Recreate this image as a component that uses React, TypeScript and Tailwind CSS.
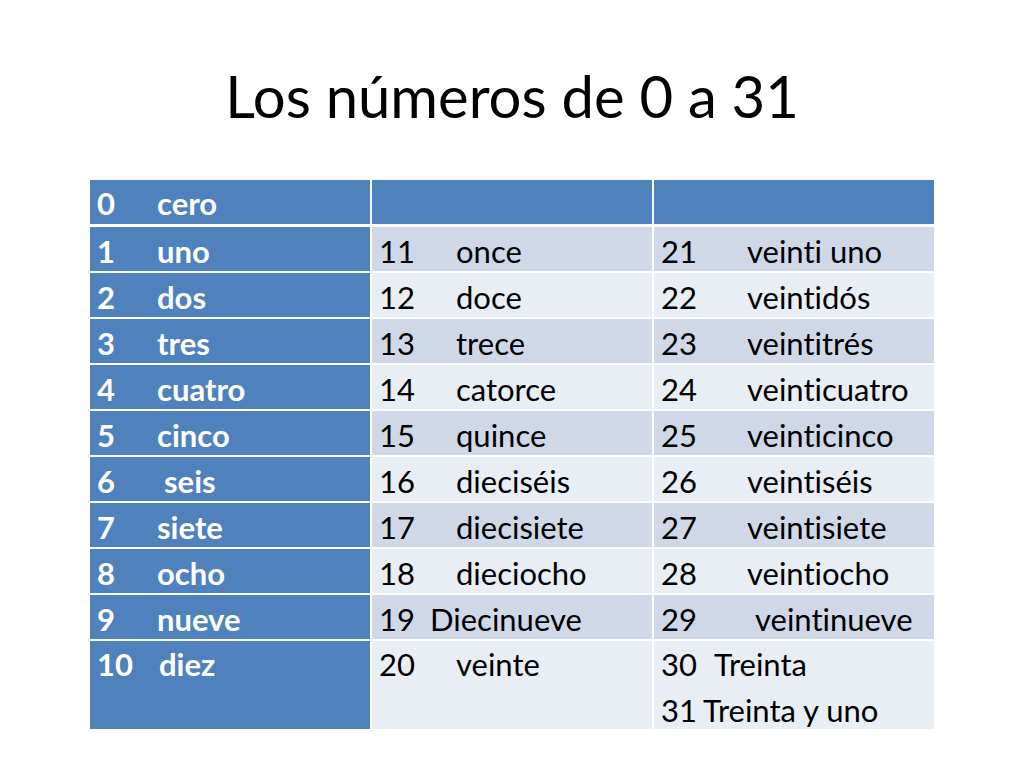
import React from "react";

type Cell = { n: string; w: string; c: string };
type Row = { a: Cell; b: Cell; c: Cell; bg: string };

const rows: Row[] = [
  { a: { n: "1", w: "uno", c: "w-[60px]" }, b: { n: "11", w: "once", c: "w-[77px]" }, c: { n: "21", w: "veinti uno", c: "w-[86px]" }, bg: "bg-[#d0d8e8]" },
  { a: { n: "2", w: "dos", c: "w-[60px]" }, b: { n: "12", w: "doce", c: "w-[77px]" }, c: { n: "22", w: "veintidós", c: "w-[86px]" }, bg: "bg-[#e9edf4]" },
  { a: { n: "3", w: "tres", c: "w-[60px]" }, b: { n: "13", w: "trece", c: "w-[77px]" }, c: { n: "23", w: "veintitrés", c: "w-[86px]" }, bg: "bg-[#d0d8e8]" },
  { a: { n: "4", w: "cuatro", c: "w-[60px]" }, b: { n: "14", w: "catorce", c: "w-[77px]" }, c: { n: "24", w: "veinticuatro", c: "w-[86px]" }, bg: "bg-[#e9edf4]" },
  { a: { n: "5", w: "cinco", c: "w-[60px]" }, b: { n: "15", w: "quince", c: "w-[77px]" }, c: { n: "25", w: "veinticinco", c: "w-[86px]" }, bg: "bg-[#d0d8e8]" },
  { a: { n: "6", w: "seis", c: "w-[67px]" }, b: { n: "16", w: "dieciséis", c: "w-[77px]" }, c: { n: "26", w: "veintiséis", c: "w-[86px]" }, bg: "bg-[#e9edf4]" },
  { a: { n: "7", w: "siete", c: "w-[60px]" }, b: { n: "17", w: "diecisiete", c: "w-[77px]" }, c: { n: "27", w: "veintisiete", c: "w-[86px]" }, bg: "bg-[#d0d8e8]" },
  { a: { n: "8", w: "ocho", c: "w-[60px]" }, b: { n: "18", w: "dieciocho", c: "w-[77px]" }, c: { n: "28", w: "veintiocho", c: "w-[86px]" }, bg: "bg-[#e9edf4]" },
  { a: { n: "9", w: "nueve", c: "w-[60px]" }, b: { n: "19", w: "Diecinueve", c: "w-[51px]" }, c: { n: "29", w: "veintinueve", c: "w-[94px]" }, bg: "bg-[#d0d8e8]" },
];

function Line({ cell, extra }: { cell: Cell; extra?: string }) {
  return (
    <div className={"flex whitespace-nowrap pl-[7px] " + (extra ?? "")}>
      <span className={"shrink-0 " + cell.c}>{cell.n}</span>
      <span>{cell.w}</span>
    </div>
  );
}

export default function App() {
  return (
    <div
      className="w-[1024px] h-[768px] bg-white overflow-hidden [font-variant-ligatures:none]"
      style={{ fontFamily: "Lato, 'Liberation Sans', sans-serif" }}
    >
      <h1 className="pt-[61px] text-center text-[58px] leading-[70px] font-normal text-black">
        Los números de 0 a 31
      </h1>
      <div className="ml-[90px] mt-[49px] w-[844px] flex flex-col text-[31px]">
        <div className="flex gap-x-[2px] h-[44px] mb-[3px] leading-[42px]">
          <div className="w-[280px] bg-[#4f81bd] text-white font-bold pt-[2px]">
            <Line cell={{ n: "0", w: "cero", c: "w-[60px]" }} />
          </div>
          <div className="w-[280px] bg-[#4f81bd]" />
          <div className="w-[280px] bg-[#4f81bd]" />
        </div>
        {rows.map((r, i) => (
          <div key={i} className="flex gap-x-[2px] h-[44px] mb-[2px] leading-[40px]">
            <div className="w-[280px] bg-[#4f81bd] text-white font-bold pt-[4px]">
              <Line cell={r.a} />
            </div>
            <div className={"w-[280px] " + r.bg + " text-black pt-[4px]"}>
              <Line cell={r.b} />
            </div>
            <div className={"w-[280px] " + r.bg + " text-black pt-[4px]"}>
              <Line cell={r.c} />
            </div>
          </div>
        ))}
        <div className="flex gap-x-[2px] h-[88px] leading-[46px]">
          <div className="w-[280px] bg-[#4f81bd] text-white font-bold">
            <Line cell={{ n: "10", w: "diez", c: "w-[62px]" }} />
          </div>
          <div className="w-[280px] bg-[#e9edf4] text-black">
            <Line cell={{ n: "20", w: "veinte", c: "w-[77px]" }} />
          </div>
          <div className="w-[280px] bg-[#e9edf4] text-black">
            <Line cell={{ n: "30", w: "Treinta", c: "w-[53px]" }} />
            <Line cell={{ n: "31", w: "Treinta y uno", c: "w-[42px]" }} />
          </div>
        </div>
      </div>
    </div>
  );
}
